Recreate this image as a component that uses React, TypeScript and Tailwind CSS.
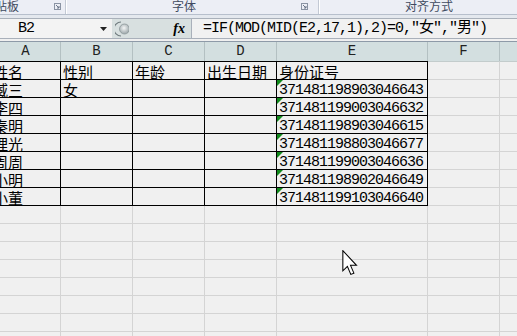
import React from "react";

const mono = { fontFamily: '"Liberation Mono", "Noto Sans CJK SC", monospace' };
const cjk = { fontFamily: '"Noto Sans CJK SC", "Liberation Sans", sans-serif' };

const colWidths = [70, 72, 72, 72, 151, 72, 72];
const headers = ["A", "B", "C", "D", "E", "F", ""];

const data: string[][] = [
  ["姓名", "性别", "年龄", "出生日期", "身份证号"],
  ["臧三", "女", "", "", "371481198903046643"],
  ["李四", "", "", "", "371481199003046632"],
  ["秦明", "", "", "", "371481198903046615"],
  ["理光", "", "", "", "371481198803046677"],
  ["周周", "", "", "", "371481199003046636"],
  ["小明", "", "", "", "371481198902046649"],
  ["小董", "", "", "", "371481199103046640"],
];

function Launcher() {
  return (
    <svg width="7" height="7" viewBox="0 0 7 7" className="mt-[3px]">
      <rect x="0.5" y="0.5" width="6" height="6" fill="none" stroke="#8a93a3" />
      <path d="M2 2 L5 5 M5 3 L5 5 L3 5" stroke="#6b7587" fill="none" />
    </svg>
  );
}

function Cell({ r, c, text }: { r: number; c: number; text: string }) {
  const bordered = r < 8 && c < 5;
  const w = colWidths[c];
  let cls = "relative shrink-0 flex items-end overflow-hidden border-r border-b ";
  cls += bordered ? "border-black " : "border-[#d4d4d4] ";
  if (r === 0) cls += bordered ? "border-t border-t-black h-[19px] " : "border-t border-t-[#c3cccc] h-[19px] ";
  else cls += "h-[18px] ";
  const isId = c === 4 && r > 0 && r < 8;
  return (
    <div className={cls} style={{ width: w }}>
      {isId && (
        <svg width="6" height="6" viewBox="0 0 6 6" className="absolute left-0 top-0">
          <polygon points="0,0 6,0 0,6" fill="#118a1c" />
        </svg>
      )}
      {text &&
        (isId ? (
          <span className="pl-[2px] text-[15px] leading-[13px] tracking-[-1px] text-black whitespace-nowrap" style={mono}>
            {text}
          </span>
        ) : (
          <span className="pl-[2px] text-[15px] leading-[15px] text-black whitespace-nowrap" style={cjk}>
            {text}
          </span>
        ))}
    </div>
  );
}

export default function App() {
  const rows = Array.from({ length: 16 }, (_, i) => i);
  return (
    <div className="relative w-[517px] h-[336px] overflow-hidden bg-[#f0f0f0]">
      {/* Ribbon group labels */}
      <div className="flex h-[15px] bg-[#eceef5] border-b border-[#b7bfcc] overflow-hidden" style={cjk}>
        <div className="flex w-[66px] shrink-0 border-r border-[#c3c9d4]">
          <div className="flex-1 text-[12px] leading-[11px] text-[#3f4a60] -ml-[17px] whitespace-nowrap">剪贴板</div>
          <div className="w-[11px] flex justify-start"><Launcher /></div>
        </div>
        <div className="w-[1px] bg-white shrink-0" />
        <div className="flex w-[252px] shrink-0 border-r border-[#c3c9d4]">
          <div className="flex-1 text-center text-[12px] leading-[11px] text-[#3f4a60]">字体</div>
          <div className="w-[17px] flex justify-start"><Launcher /></div>
        </div>
        <div className="w-[1px] bg-white shrink-0" />
        <div className="flex w-[235px] shrink-0">
          <div className="flex-1 text-center text-[12px] leading-[11px] text-[#3f4a60]">对齐方式</div>
          <div className="w-[17px]" />
        </div>
      </div>
      <div className="h-[3px] bg-[#e4e8ee]" />
      {/* Formula bar */}
      <div className="flex h-[21px] border-t border-b border-[#a9b0ba] bg-[#f1f1f1]">
        <div className="w-[112px] shrink-0 flex items-center justify-between pl-[18px] pr-[5px] bg-[#f3f3f3]">
          <span className="text-[15px] tracking-[-1px] text-black leading-none" style={mono}>B2</span>
          <svg width="7" height="4" viewBox="0 0 7 4"><polygon points="0,0 7,0 3.5,4" fill="#222" /></svg>
        </div>
        <div className="w-[80px] shrink-0 flex items-center justify-between bg-[#d8e0e0] border-r border-[#a9b0ba] pl-[3px] pr-[6px]">
          <svg width="14" height="16" viewBox="0 0 14 16">
            <defs>
              <radialGradient id="g" cx="45%" cy="40%" r="60%">
                <stop offset="0%" stopColor="#f4f6f6" />
                <stop offset="100%" stopColor="#9aa5a8" />
              </radialGradient>
            </defs>
            <path d="M6 1 A7 7 0 0 0 6 15" fill="none" stroke="#6f7b7e" strokeWidth="1.2" />
            <circle cx="9.5" cy="8" r="5" fill="url(#g)" stroke="#8c9799" strokeWidth="0.8" />
          </svg>
          <span className="text-[14px] italic font-bold text-black leading-none" style={{ fontFamily: '"Liberation Serif", serif' }}>
            fx
          </span>
        </div>
        <div className="flex-1 flex items-center pl-[11px] whitespace-nowrap">
          <span className="text-[15px] tracking-[-1px] text-black leading-none" style={mono}>
            =IF(MOD(MID(E2,17,1),2)=0,"女","男")
          </span>
        </div>
      </div>
      <div className="h-[2px] bg-[#f0f0f0]" />
      {/* Sheet */}
      <div className="-ml-[9px]">
        <div className="flex h-[20px] bg-[#d3dfe0] border-t border-[#8e9aa8]">
          {headers.map((h, i) => (
            <div
              key={i}
              className="shrink-0 flex items-center justify-center border-r border-[#b3c0c2] text-[14px] text-[#222]"
              style={{ width: colWidths[i], ...mono }}
            >
              {h}
            </div>
          ))}
        </div>
        {rows.map((r) => (
          <div key={r} className="flex">
            {colWidths.map((_, c) => (
              <Cell key={c} r={r} c={c} text={data[r]?.[c] ?? ""} />
            ))}
          </div>
        ))}
      </div>
      {/* Mouse cursor */}
      <svg className="absolute left-[342px] top-[250px]" width="16" height="26" viewBox="0 0 12 20">
        <path d="M0.5 0.5 L0.5 16 L4 12.6 L6.6 18.8 L9 17.8 L6.4 11.8 L11 11.8 Z" fill="#ffffff" stroke="#000" strokeWidth="0.8" strokeLinejoin="miter" />
      </svg>
    </div>
  );
}
